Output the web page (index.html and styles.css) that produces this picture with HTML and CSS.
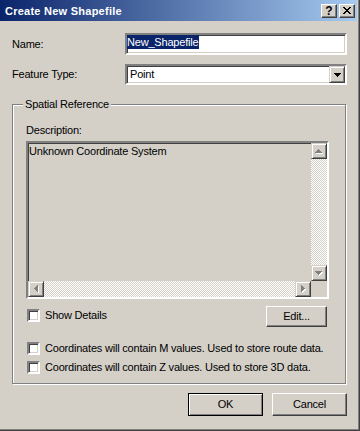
FILE: index.html
```html
<!DOCTYPE html>
<html lang="en">
<head>
    <meta charset="UTF-8">
    <title>Create New Shapefile</title>
    <link rel="stylesheet" href="styles.css">
</head>
<body>
    <div class="window">
        <div class="titlebar">
            <span class="title">Create New Shapefile</span>
            <div class="cap-buttons">
                <span class="cap-btn help">?</span>
                <span class="cap-btn">
                    <svg width="8" height="7" viewBox="0 0 8 7"><path fill="#000" d="M0 0h2v1H0z M6 0h2v1H6z M1 1h2v1H1z M5 1h2v1H5z M2 2h4v1H2z M3 3h2v1H3z M2 4h4v1H2z M1 5h2v1H1z M5 5h2v1H5z M0 6h2v1H0z M6 6h2v1H6z"/></svg>
                </span>
            </div>
        </div>

        <div class="content">
            <div class="row row-name">
                <span class="label">Name:</span>
                <div class="field name-field"><span class="selected">New_Shapefile</span></div>
            </div>
            <div class="row row-type">
                <span class="label">Feature Type:</span>
                <div class="field combo">
                    <span class="combo-text">Point</span>
                    <span class="combo-btn">
                        <svg width="7" height="4" viewBox="0 0 7 4"><path fill="#000" d="M0 0h7v1H0z M1 1h5v1H1z M2 2h3v1H2z M3 3h1v1H3z"/></svg>
                    </span>
                </div>
            </div>

            <div class="group">
                <div class="group-title">Spatial Reference</div>
                <div class="desc-label">Description:</div>
                <div class="desc-box">
                    <div class="desc-main">
                        <div class="desc-text">Unknown Coordinate System</div>
                        <div class="vscroll">
                            <span class="sb-btn">
                                <svg width="8" height="5" viewBox="0 0 8 5"><path fill="#fff" d="M4 1h1v1H4z M3 2h3v1H3z M2 3h5v1H2z M1 4h7v1H1z"/><path fill="#808080" d="M3 0h1v1H3z M2 1h3v1H2z M1 2h5v1H1z M0 3h7v1H0z"/></svg>
                            </span>
                            <span class="sb-track"></span>
                            <span class="sb-btn">
                                <svg width="8" height="5" viewBox="0 0 8 5"><path fill="#fff" d="M1 1h7v1H1z M2 2h5v1H2z M3 3h3v1H3z M4 4h1v1H4z"/><path fill="#808080" d="M0 0h7v1H0z M1 1h5v1H1z M2 2h3v1H2z M3 3h1v1H3z"/></svg>
                            </span>
                        </div>
                    </div>
                    <div class="hscroll">
                        <span class="sb-btn">
                            <svg width="5" height="8" viewBox="0 0 5 8"><path fill="#fff" d="M1 4h1v1H1z M2 3h1v3H2z M3 2h1v5H3z M4 1h1v7H4z"/><path fill="#808080" d="M0 3h1v1H0z M1 2h1v3H1z M2 1h1v5H2z M3 0h1v7H3z"/></svg>
                        </span>
                        <span class="sb-track"></span>
                        <span class="sb-btn">
                            <svg width="5" height="8" viewBox="0 0 5 8"><path fill="#fff" d="M1 1h1v7H1z M2 2h1v5H2z M3 3h1v3H3z M4 4h1v1H4z"/><path fill="#808080" d="M0 0h1v7H0z M1 1h1v5H1z M2 2h1v3H2z M3 3h1v1H3z"/></svg>
                        </span>
                        <span class="sb-corner"></span>
                    </div>
                </div>

                <div class="details-row">
                    <label class="check"><span class="check-box"></span>Show Details</label>
                    <span class="button edit-btn">Edit...</span>
                </div>
                <div class="check-lines">
                    <label class="check check-line"><span class="check-box"></span>Coordinates will contain M values. Used to store route data.</label>
                    <label class="check check-line"><span class="check-box"></span>Coordinates will contain Z values. Used to store 3D data.</label>
                </div>
            </div>

            <div class="dialog-buttons">
                <span class="button default">OK</span>
                <span class="button">Cancel</span>
            </div>
        </div>
    </div>
</body>
</html>
```

FILE: styles.css
```css
body {
    margin: 0;
    font-family: "Liberation Sans", Arial, sans-serif;
    font-size: 11px;
    line-height: 13px;
    letter-spacing: -0.2px;
    color: #000;
    background-color: #d4d0c8;
}

.window {
    width: 360px;
    height: 431px;
    box-sizing: border-box;
    background-color: #d4d0c8;
    border-right: 1px solid #404040;
    border-bottom: 1px solid #404040;
    box-shadow: inset -1px -1px 0 #808080;
}

/* title bar */
.titlebar {
    height: 21px;
    margin-right: 2px;
    display: flex;
    align-items: center;
    justify-content: space-between;
    padding: 0 2px 0 5px;
    background: linear-gradient(to right, #0a246a, #a6caf0);
}

    .titlebar .title {
        color: #fff;
        font-weight: bold;
        letter-spacing: 0.25px;
        padding-top: 1px;
    }

.cap-buttons {
    display: flex;
    gap: 2px;
}

.cap-btn {
    width: 16px;
    height: 14px;
    box-sizing: border-box;
    display: flex;
    align-items: center;
    justify-content: center;
    background-color: #d4d0c8;
    border: 1px solid;
    border-color: #fff #404040 #404040 #fff;
    box-shadow: inset -1px -1px 0 #808080;
}

    .cap-btn.help {
        font-weight: bold;
        font-size: 12px;
        line-height: 12px;
        letter-spacing: 0;
    }

/* form */
.content {
    padding: 12px 12px 0 12px;
}

.row {
    display: flex;
    align-items: center;
}

    .row .label {
        width: 113px;
    }

.row-type {
    margin-top: 9px;
}

.field {
    width: 222px;
    box-sizing: border-box;
    background-color: #fff;
    border: 2px solid;
    border-color: #808080 #fff #fff #808080;
    box-shadow: inset 1px 1px 0 #404040, inset -1px -1px 0 #d4d0c8;
}

.name-field {
    height: 22px;
}

    .name-field .selected {
        display: inline-block;
        background-color: #0a246a;
        color: #fff;
        line-height: 14px;
        padding: 0 1px 0 0;
    }

.combo {
    height: 21px;
    display: flex;
    align-items: center;
    justify-content: space-between;
}

.combo-text {
    padding-left: 3px;
}

.combo-btn {
    width: 16px;
    height: 17px;
    box-sizing: border-box;
    display: flex;
    align-items: center;
    justify-content: center;
    background-color: #d4d0c8;
    border: 1px solid;
    border-color: #d4d0c8 #404040 #404040 #d4d0c8;
    box-shadow: inset 1px 1px 0 #fff, inset -1px -1px 0 #808080;
}

/* group box */
.group {
    width: 334px;
    box-sizing: border-box;
    margin-top: 19px;
    padding: 0 18px 6px 13px;
    border: 1px solid #808080;
    box-shadow: inset 1px 1px 0 #fff, 1px 1px 0 #fff;
}

.group-title {
    width: fit-content;
    margin: -7px 0 0 -3px;
    padding: 0 2px;
    background-color: #d4d0c8;
}

.desc-label {
    margin-top: 13px;
}

.desc-box {
    width: 303px;
    height: 158px;
    box-sizing: border-box;
    margin-top: 4px;
    display: flex;
    flex-direction: column;
    background-color: #d4d0c8;
    border: 2px solid;
    border-color: #808080 #fff #fff #808080;
    box-shadow: inset 1px 1px 0 #404040, inset -1px -1px 0 #d4d0c8;
}

.desc-main {
    flex: 1;
    display: flex;
}

.desc-text {
    flex: 1;
    padding: 2px 0 0 1px;
}

.vscroll {
    width: 16px;
    display: flex;
    flex-direction: column;
}

.hscroll {
    height: 16px;
    display: flex;
}

.sb-btn {
    width: 16px;
    height: 16px;
    flex: none;
    box-sizing: border-box;
    display: flex;
    align-items: center;
    justify-content: center;
    background-color: #d4d0c8;
    border: 1px solid;
    border-color: #d4d0c8 #404040 #404040 #d4d0c8;
    box-shadow: inset 1px 1px 0 #fff, inset -1px -1px 0 #808080;
}

.sb-track {
    flex: 1;
    background-image: conic-gradient(#fff 25%, #d4d0c8 0 50%, #fff 0 75%, #d4d0c8 0);
    background-size: 2px 2px;
}

.sb-corner {
    width: 16px;
    flex: none;
}

/* checkboxes and buttons */
.details-row {
    display: flex;
    align-items: flex-start;
    justify-content: space-between;
    margin-top: 7px;
}

    .details-row .check {
        margin-top: 3px;
    }

.check {
    display: flex;
    align-items: center;
    white-space: nowrap;
}

.check-lines {
    margin-top: 12px;
}

.check-line {
    height: 19px;
}

.check-box {
    width: 13px;
    height: 13px;
    flex: none;
    box-sizing: border-box;
    margin: 0 5px 0 1px;
    background-color: #fff;
    border: 2px solid;
    border-color: #808080 #fff #fff #808080;
    box-shadow: inset 1px 1px 0 #404040, inset -1px -1px 0 #d4d0c8;
}

.button {
    width: 75px;
    height: 23px;
    box-sizing: border-box;
    display: flex;
    align-items: center;
    justify-content: center;
    background-color: #d4d0c8;
    border: 1px solid;
    border-color: #fff #404040 #404040 #fff;
    box-shadow: inset -1px -1px 0 #808080;
}

.edit-btn {
    width: 61px;
    height: 21px;
}

.dialog-buttons {
    display: flex;
    justify-content: flex-end;
    gap: 9px;
    margin-top: 9px;
}

    .dialog-buttons .default {
        border-color: #000;
        box-shadow: inset 1px 1px 0 #fff, inset -1px -1px 0 #808080;
    }
```
